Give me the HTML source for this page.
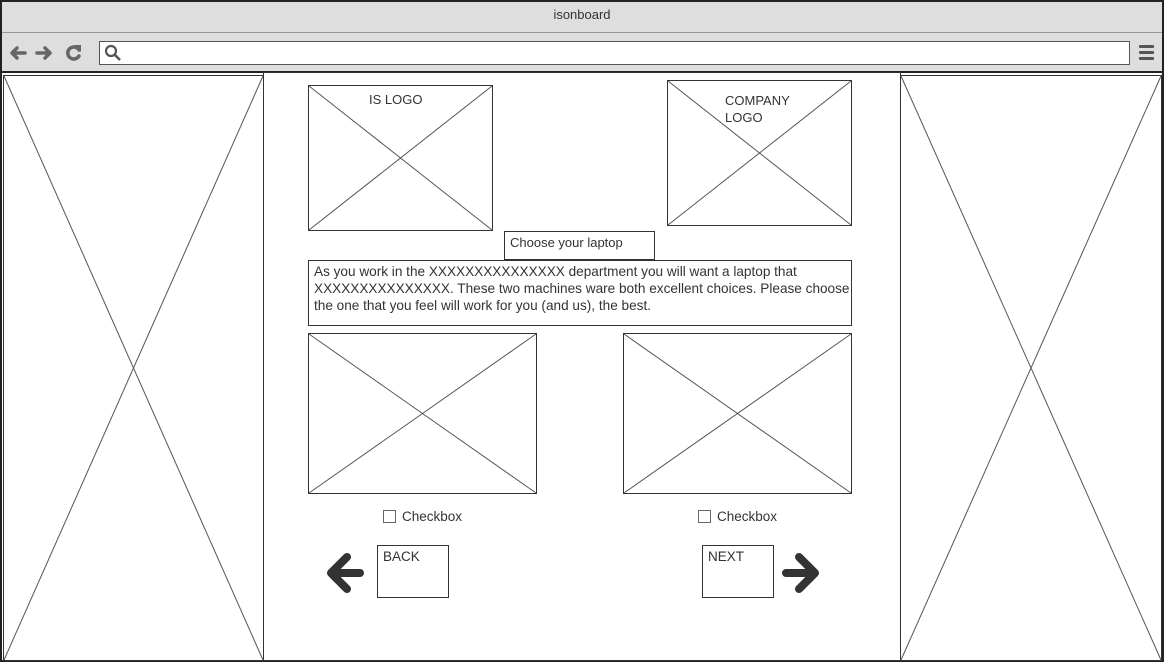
<!DOCTYPE html>
<html><head><style>
body{margin:0;width:1164px;height:662px;overflow:hidden;background:#fff;font-family:"Liberation Sans",sans-serif;position:relative}
.t{position:absolute;font-size:13px;color:#333;line-height:17px}
</style></head><body>
<svg width="1164" height="662" style="position:absolute;left:0;top:0" fill="none" stroke="#333">
<rect x="0" y="0" width="1164" height="73" fill="#dedede" stroke="none"/>
<line x1="0" y1="32.5" x2="1164" y2="32.5" stroke="#999"/>
<line x1="0" y1="72" x2="1164" y2="72" stroke="#222" stroke-width="2"/>
<rect x="1" y="1" width="1162" height="660" stroke="#222" stroke-width="2"/>
<rect x="99.5" y="41.5" width="1030" height="23" fill="#fff" stroke="#555"/>
<circle cx="111" cy="51" r="5" stroke="#555" stroke-width="2.2"/><line x1="115" y1="55" x2="120" y2="60" stroke="#555" stroke-width="2.6"/>
<g stroke="#666" stroke-width="3.5" stroke-linecap="round" stroke-linejoin="round">
<path d="M25 53H12M17 48l-5 5 5 5"/><path d="M37 53h13M45 48l5 5-5 5"/>
<path d="M79 50a6 6 0 1 0 0 6"/></g>
<path d="M74 45l7 0 0 7z" fill="#666" stroke="none"/>
<g fill="#555" stroke="none"><rect x="1139" y="45" width="15" height="3" rx="1"/><rect x="1139" y="51" width="15" height="3" rx="1"/><rect x="1139" y="57" width="15" height="3" rx="1"/></g>
<rect x="263.5" y="72.5" width="637" height="588"/>
<g stroke-width="1">
<rect x="3.5" y="75.5" width="260" height="585"/><path d="M4 76L263 660M263 76L4 660" stroke="#555"/>
<rect x="900.5" y="75.5" width="261" height="585"/><path d="M901 76L1161 660M1161 76L901 660" stroke="#555"/>
<rect x="308.5" y="85.5" width="184" height="145"/><path d="M309 86L492 230M492 86L309 230" stroke="#555"/>
<rect x="667.5" y="80.5" width="184" height="145"/><path d="M668 81L851 225M851 81L668 225" stroke="#555"/>
<rect x="504.5" y="231.5" width="150" height="28" fill="#fff"/>
<rect x="308.5" y="260.5" width="543" height="65"/>
<rect x="308.5" y="333.5" width="228" height="160"/><path d="M309 334L536 493M536 334L309 493" stroke="#555"/>
<rect x="623.5" y="333.5" width="228" height="160"/><path d="M624 334L851 493M851 334L624 493" stroke="#555"/>
<rect x="383.5" y="510.5" width="12" height="12" stroke="#666"/>
<rect x="698.5" y="510.5" width="12" height="12" stroke="#666"/>
<rect x="377.5" y="545.5" width="71" height="52"/>
<rect x="702.5" y="545.5" width="71" height="52"/>
</g>
<g stroke="#333" stroke-width="8" stroke-linecap="round" stroke-linejoin="round">
<path d="M360 573H332M347 557l-16 16 16 16"/>
<path d="M786 573h28M799 557l16 16-16 16"/>
</g>
</svg>
<div class="t" style="left:0;width:1164px;text-align:center;top:6px">isonboard</div>
<div class="t" style="left:369px;top:91px">IS LOGO</div>
<div class="t" style="left:725px;top:92px">COMPANY<br>LOGO</div>
<div class="t" style="left:510px;top:234px">Choose your laptop</div>
<div class="t" style="left:314px;top:263px;width:536px;font-size:13.6px">As you work in the XXXXXXXXXXXXXXX department you will want a laptop that XXXXXXXXXXXXXXX. These two machines ware both excellent choices. Please choose the one that you feel will work for you (and us), the best.</div>
<div class="t" style="left:402px;top:508px;font-size:13.5px">Checkbox</div>
<div class="t" style="left:717px;top:508px;font-size:13.5px">Checkbox</div>
<div class="t" style="left:383px;top:548px;font-size:13.5px">BACK</div>
<div class="t" style="left:708px;top:548px;font-size:13.5px">NEXT</div>
</body></html>
